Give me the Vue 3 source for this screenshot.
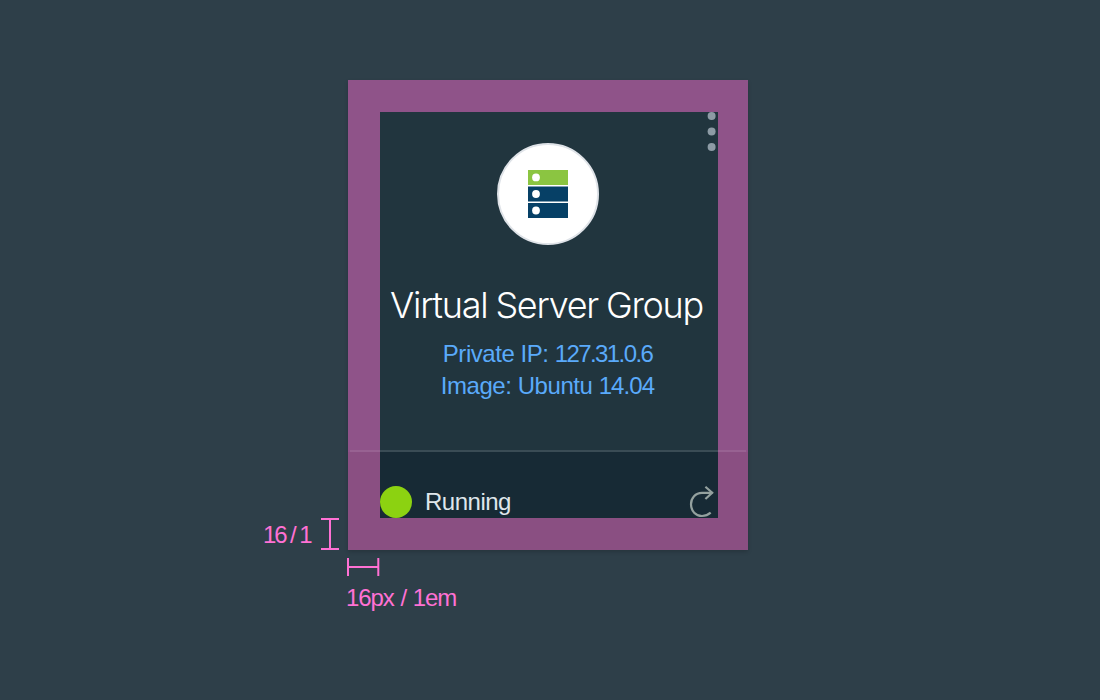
<script setup>
const details = [
  { label: 'Private IP:', value: '127.31.0.6', name: 'ip' },
  { label: 'Image: Ubuntu', value: '14.04', name: 'image' },
]
</script>

<template>
  <main class="page">
    <aside class="measure-y">
      <span class="label-y">16 / 1</span>
      <svg width="18" height="33" viewBox="0 0 18 33" fill="none" stroke="#ff71d4" stroke-width="2">
        <path d="M0 2H18M0 32H18M9 2V32" />
      </svg>
    </aside>

    <article class="card">
      <section class="summary">
        <div class="summary-body">
          <svg class="more" width="8" height="39" viewBox="0 0 8 39" fill="#8d9ba5">
            <circle cx="3.6" cy="4" r="4" />
            <circle cx="3.6" cy="19.5" r="4" />
            <circle cx="3.6" cy="35" r="4" />
          </svg>
          <div class="avatar">
            <svg width="40" height="48" viewBox="0 0 40 48">
              <path fill="#8bc541" d="M0 0H40V15H0Z" />
              <path fill="#064066" d="M0 16.6H40V31.4H0ZM0 33H40V48H0Z" />
              <g fill="#fff">
                <circle cx="8" cy="7.4" r="3.9" />
                <circle cx="8" cy="24" r="3.9" />
                <circle cx="8" cy="40.5" r="3.9" />
              </g>
            </svg>
          </div>
          <h1 class="title">Virtual Server Group</h1>
          <p v-for="d in details" :key="d.name" class="detail" :class="d.name">
            {{ d.label }} <span class="value">{{ d.value }}</span>
          </p>
        </div>
      </section>
      <hr class="divider" />
      <footer class="status">
        <div class="status-body">
          <i class="dot"></i>
          <span class="state">Running</span>
          <svg class="refresh" width="26" height="32" viewBox="0 0 26 32" fill="none" stroke="#94a19f" stroke-width="2.2">
            <path d="M23.5 6.8H13C6.4 6.8 2 12 2 18.3C2 25 6.8 30 13 30C16.4 30 19.3 28.8 21.7 26.7" />
            <path d="M16.4 0.8L23.2 6.8L16.4 13" />
          </svg>
        </div>
      </footer>
    </article>

    <aside class="measure-x">
      <svg width="33" height="18" viewBox="0 0 33 18" fill="none" stroke="#ff71d4" stroke-width="2">
        <path d="M1 0V18M31.3 0V18M1 9H31.3" />
      </svg>
      <span class="label-x">16px / 1em</span>
    </aside>
  </main>
</template>

<style>
body {
  background: #2e3f49;
}
</style>

<style scoped>
.page {
  box-sizing: border-box;
  width: 1100px;
  height: 700px;
  padding-top: 80px;
  overflow: hidden;
  display: grid;
  grid-template-columns: 348px 400px;
  grid-template-rows: 470px 140px;
  background: #2e3f49;
  color: #ff71d4;
  font: 24px/32px "Liberation Sans", sans-serif;
}
svg {
  display: block;
  overflow: visible;
}
span,
h1,
p {
  white-space: nowrap;
}
.measure-y {
  display: flex;
  align-self: end;
  justify-content: flex-end;
  align-items: flex-end;
  gap: 10px;
  padding-right: 9px;
  height: 33px;
}
.label-y {
  width: 48px;
  height: 31px;
  letter-spacing: -2.1px;
}
.card {
  height: 470px;
  box-shadow: 0 2px 4px rgba(0, 0, 0, 0.17);
  display: flex;
  flex-direction: column;
}
.summary {
  box-sizing: border-box;
  height: 370px;
  padding: 32px 30px 0 32px;
  background: #8f5389;
}
.summary-body {
  height: 338px;
  background: #21353e;
  display: flex;
  flex-direction: column;
  align-items: center;
}
.more {
  align-self: flex-end;
  margin-right: 2px;
  flex: none;
}
.avatar {
  box-sizing: border-box;
  flex: none;
  width: 102px;
  height: 102px;
  margin: -8px 2px 0 0;
  border: 2px solid #dfe3e8;
  border-radius: 50%;
  background: #fff;
  display: flex;
  align-items: center;
  justify-content: center;
}
.title {
  margin: 38px 5px 0 0;
  height: 44px;
  font: 300 36px/44px Inter, sans-serif;
  letter-spacing: -1.28px;
  word-spacing: -0.8px;
  color: #fff;
}
.detail {
  margin: 0 3px 0 0;
  color: #5aaafa;
  letter-spacing: -0.45px;
}
.value {
  letter-spacing: -0.9px;
}
.ip {
  margin-top: 11px;
}
.ip .value {
  letter-spacing: -1.6px;
}
.divider {
  box-sizing: border-box;
  width: 100%;
  height: 2px;
  margin: 0;
  border: 0;
  background: linear-gradient(90deg, #8f5389 2px, #986292 2px 32px, #3a4c55 32px 370px, #986292 370px 398px, #8f5389 398px);
}
.status {
  box-sizing: border-box;
  height: 98px;
  padding: 0 30px 32px 32px;
  background: #8a4f82;
}
.status-body {
  height: 66px;
  background: #172a35;
  display: flex;
  align-items: flex-end;
}
.dot {
  width: 32px;
  height: 32px;
  border-radius: 50%;
  background: #8cd211;
}
.state {
  margin-left: 13px;
  color: #dfe6eb;
  letter-spacing: -0.5px;
}
.refresh {
  margin: 0 3px 0 auto;
}
.measure-x {
  grid-column: 2;
  padding-top: 8px;
  margin-left: -1px;
}
.label-x {
  display: block;
  margin: 6px 0 0 -1px;
  letter-spacing: -1.1px;
  word-spacing: 1.2px;
}
</style>
